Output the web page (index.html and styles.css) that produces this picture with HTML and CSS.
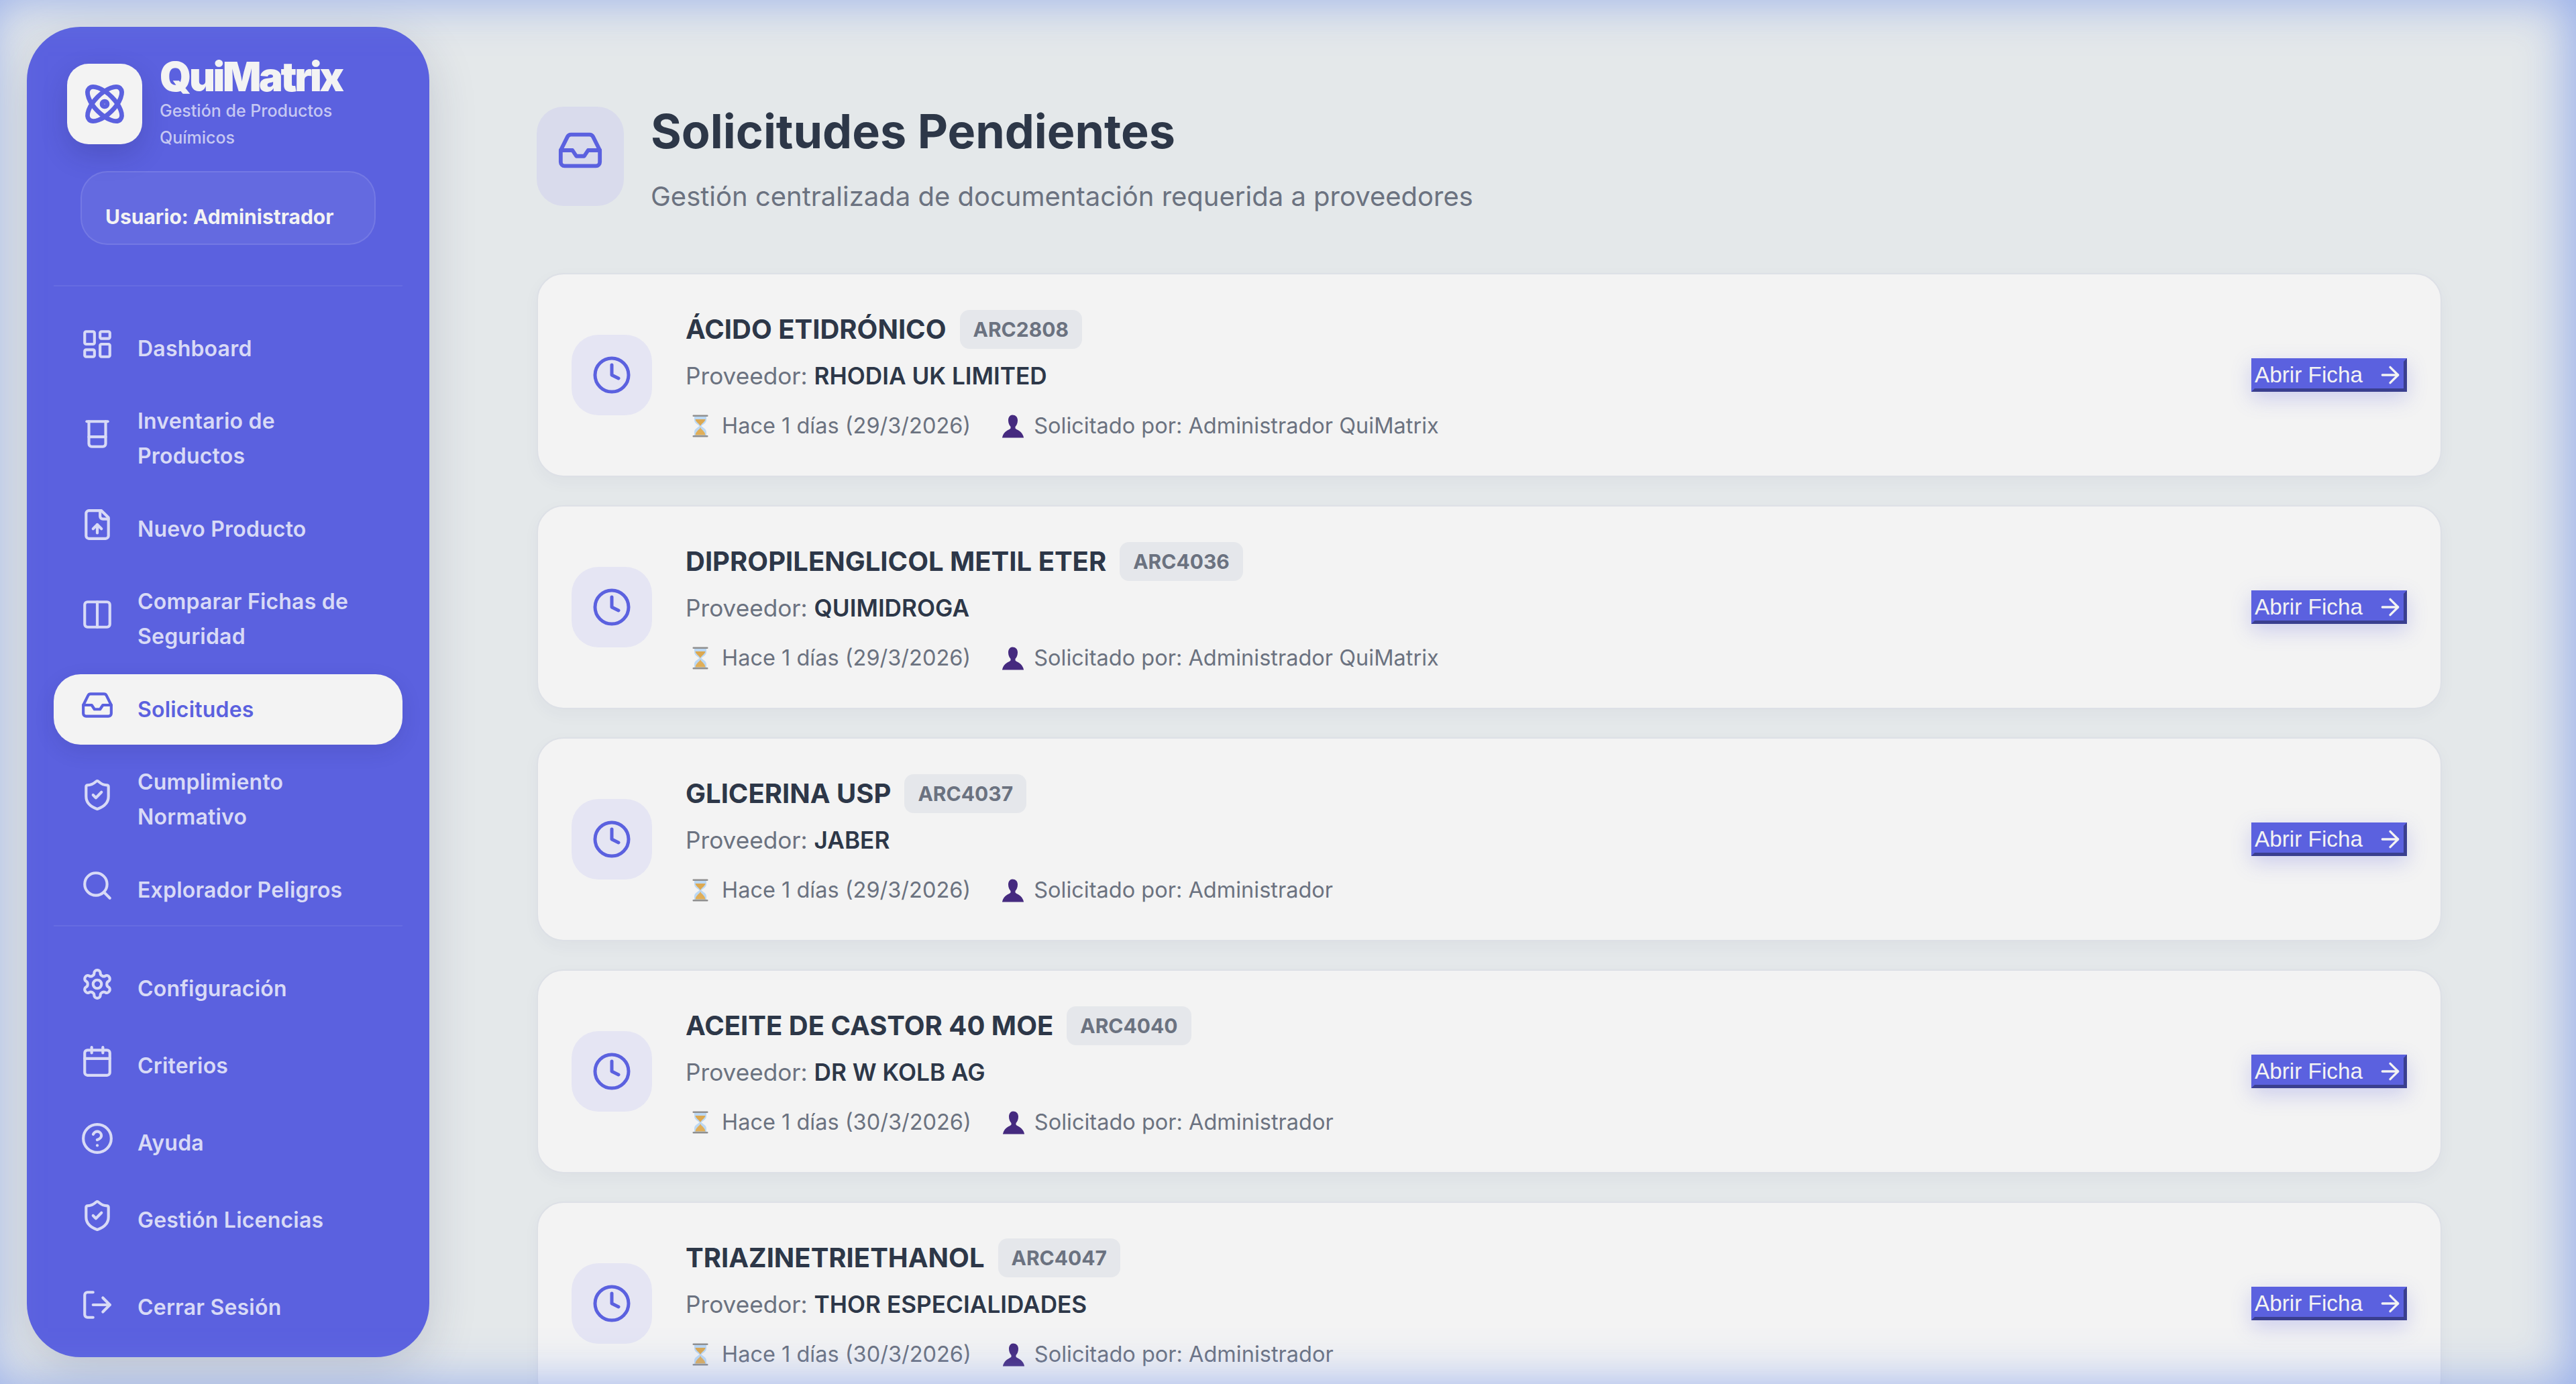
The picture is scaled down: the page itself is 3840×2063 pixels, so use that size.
FILE: index.html
```html
<!DOCTYPE html>
<html lang="es">
<head>
  <meta charset="UTF-8" />
  <meta name="viewport" content="width=device-width, initial-scale=1.0"/>
  <title>QuiMatrix: Solicitudes Pendientes</title>
  <link rel="stylesheet" href="styles.css">
</head>
<body>
  <div class="app">
    <aside class="sidebar">
      <div class="brand">
        <div class="brand-logo">
          <svg class="ico" viewBox="0 0 24 24"><circle cx="12" cy="12" r="1.4"/><path d="M20.2 20.2c2.04-2.03.02-7.36-4.5-11.9-4.54-4.52-9.87-6.54-11.9-4.5-2.04 2.03-.02 7.36 4.5 11.9 4.54 4.52 9.87 6.54 11.9 4.5Z"/><path d="M15.7 15.7c4.52-4.54 6.54-9.87 4.5-11.9-2.03-2.04-7.36-.02-11.9 4.5-4.52 4.54-6.54 9.87-4.5 11.9 2.03 2.04 7.36.02 11.9-4.5Z"/></svg>
        </div>
        <div class="brand-text">
          <div class="brand-name">QuiMatrix</div>
          <div class="brand-sub">Gestión de Productos Químicos</div>
        </div>
      </div>

      <div class="user-box">Usuario: Administrador</div>

      <nav class="nav nav-main">
        <a class="nav-item"><svg class="ico" viewBox="0 0 24 24"><rect width="7" height="9" x="3" y="3" rx="1"/><rect width="7" height="5" x="14" y="3" rx="1"/><rect width="7" height="9" x="14" y="12" rx="1"/><rect width="7" height="5" x="3" y="16" rx="1"/></svg><span>Dashboard</span></a>
        <a class="nav-item"><svg class="ico" viewBox="0 0 24 24"><path d="M4.5 3h15"/><path d="M6 3v16a2 2 0 0 0 2 2h8a2 2 0 0 0 2-2V3"/><path d="M6 14h12"/></svg><span>Inventario de Productos</span></a>
        <a class="nav-item"><svg class="ico" viewBox="0 0 24 24"><path d="M15 2H6a2 2 0 0 0-2 2v16a2 2 0 0 0 2 2h12a2 2 0 0 0 2-2V7Z"/><path d="M14 2v4a2 2 0 0 0 2 2h4"/><path d="M12 12v6"/><path d="m15 15-3-3-3 3"/></svg><span>Nuevo Producto</span></a>
        <a class="nav-item"><svg class="ico" viewBox="0 0 24 24"><rect width="18" height="18" x="3" y="3" rx="2"/><path d="M12 3v18"/></svg><span>Comparar Fichas de Seguridad</span></a>
        <a class="nav-item active"><svg class="ico" viewBox="0 0 24 24"><polyline points="22 12 16 12 14 15 10 15 8 12 2 12"/><path d="M5.45 5.11 2 12v6a2 2 0 0 0 2 2h16a2 2 0 0 0 2-2v-6l-3.45-6.89A2 2 0 0 0 16.76 4H7.24a2 2 0 0 0-1.79 1.11z"/></svg><span>Solicitudes</span></a>
        <a class="nav-item"><svg class="ico" viewBox="0 0 24 24"><path d="M20 13c0 5-3.5 7.5-7.66 8.95a1 1 0 0 1-.67-.01C7.5 20.5 4 18 4 13V6a1 1 0 0 1 1-1c2 0 4.5-1.2 6.24-2.72a1.17 1.17 0 0 1 1.52 0C14.51 3.81 17 5 19 5a1 1 0 0 1 1 1z"/><path d="m9 12 2 2 4-4"/></svg><span>Cumplimiento Normativo</span></a>
        <a class="nav-item"><svg class="ico" viewBox="0 0 24 24"><circle cx="11" cy="11" r="8"/><path d="m21 21-4.3-4.3"/></svg><span>Explorador Peligros</span></a>
      </nav>

      <nav class="nav nav-bottom">
        <a class="nav-item"><svg class="ico" viewBox="0 0 24 24"><path d="M12.22 2h-.44a2 2 0 0 0-2 2v.18a2 2 0 0 1-1 1.73l-.43.25a2 2 0 0 1-2 0l-.15-.08a2 2 0 0 0-2.73.73l-.22.38a2 2 0 0 0 .73 2.73l.15.1a2 2 0 0 1 1 1.72v.51a2 2 0 0 1-1 1.74l-.15.09a2 2 0 0 0-.73 2.73l.22.38a2 2 0 0 0 2.73.73l.15-.08a2 2 0 0 1 2 0l.43.25a2 2 0 0 1 1 1.73V20a2 2 0 0 0 2 2h.44a2 2 0 0 0 2-2v-.18a2 2 0 0 1 1-1.73l.43-.25a2 2 0 0 1 2 0l.15.08a2 2 0 0 0 2.73-.73l.22-.39a2 2 0 0 0-.73-2.73l-.15-.08a2 2 0 0 1-1-1.74v-.5a2 2 0 0 1 1-1.74l.15-.09a2 2 0 0 0 .73-2.73l-.22-.38a2 2 0 0 0-2.73-.73l-.15.08a2 2 0 0 1-2 0l-.43-.25a2 2 0 0 1-1-1.73V4a2 2 0 0 0-2-2z"/><circle cx="12" cy="12" r="3"/></svg><span>Configuración</span></a>
        <a class="nav-item"><svg class="ico" viewBox="0 0 24 24"><path d="M8 2v4"/><path d="M16 2v4"/><rect width="18" height="18" x="3" y="4" rx="2"/><path d="M3 10h18"/></svg><span>Criterios</span></a>
        <a class="nav-item"><svg class="ico" viewBox="0 0 24 24"><circle cx="12" cy="12" r="10"/><path d="M9.09 9a3 3 0 0 1 5.83 1c0 2-3 3-3 3"/><path d="M12 17h.01"/></svg><span>Ayuda</span></a>
        <a class="nav-item"><svg class="ico" viewBox="0 0 24 24"><path d="M20 13c0 5-3.5 7.5-7.66 8.95a1 1 0 0 1-.67-.01C7.5 20.5 4 18 4 13V6a1 1 0 0 1 1-1c2 0 4.5-1.2 6.24-2.72a1.17 1.17 0 0 1 1.52 0C14.51 3.81 17 5 19 5a1 1 0 0 1 1 1z"/><path d="m9 12 2 2 4-4"/></svg><span>Gestión Licencias</span></a>
      </nav>

      <a class="nav-item logout"><svg class="ico" viewBox="0 0 24 24"><path d="M9 21H5a2 2 0 0 1-2-2V5a2 2 0 0 1 2-2h4"/><polyline points="16 17 21 12 16 7"/><line x1="21" y1="12" x2="9" y2="12"/></svg><span>Cerrar Sesión</span></a>
    </aside>

    <main class="main">
      <header class="page-head">
        <div class="head-icon">
          <svg class="ico" viewBox="0 0 24 24"><polyline points="22 12 16 12 14 15 10 15 8 12 2 12"/><path d="M5.45 5.11 2 12v6a2 2 0 0 0 2 2h16a2 2 0 0 0 2-2v-6l-3.45-6.89A2 2 0 0 0 16.76 4H7.24a2 2 0 0 0-1.79 1.11z"/></svg>
        </div>
        <div>
          <h1>Solicitudes Pendientes</h1>
          <p>Gestión centralizada de documentación requerida a proveedores</p>
        </div>
      </header>

      <section class="cards">
        <article class="card">
          <div class="card-icon"><svg class="ico" viewBox="0 0 24 24"><circle cx="12" cy="12" r="10"/><polyline points="12 6 12 12 16 14"/></svg></div>
          <div class="card-body">
            <div class="card-title"><h3>ÁCIDO ETIDRÓNICO</h3><span class="code">ARC2808</span></div>
            <div class="card-prov">Proveedor: <strong>RHODIA UK LIMITED</strong></div>
            <div class="card-meta">
              <span class="meta-item"><svg class="emoji" viewBox="0 0 36 36"><use href="#hourglass"/></svg>Hace 1 días (29/3/2026)</span>
              <span class="meta-item"><svg class="emoji" viewBox="0 0 36 36"><use href="#person"/></svg>Solicitado por: Administrador QuiMatrix</span>
            </div>
          </div>
          <button class="open-btn">Abrir Ficha<svg class="ico" viewBox="0 0 24 24"><path d="M5 12h14"/><path d="m12 5 7 7-7 7"/></svg></button>
        </article>

        <article class="card">
          <div class="card-icon"><svg class="ico" viewBox="0 0 24 24"><circle cx="12" cy="12" r="10"/><polyline points="12 6 12 12 16 14"/></svg></div>
          <div class="card-body">
            <div class="card-title"><h3>DIPROPILENGLICOL METIL ETER</h3><span class="code">ARC4036</span></div>
            <div class="card-prov">Proveedor: <strong>QUIMIDROGA</strong></div>
            <div class="card-meta">
              <span class="meta-item"><svg class="emoji" viewBox="0 0 36 36"><use href="#hourglass"/></svg>Hace 1 días (29/3/2026)</span>
              <span class="meta-item"><svg class="emoji" viewBox="0 0 36 36"><use href="#person"/></svg>Solicitado por: Administrador QuiMatrix</span>
            </div>
          </div>
          <button class="open-btn">Abrir Ficha<svg class="ico" viewBox="0 0 24 24"><path d="M5 12h14"/><path d="m12 5 7 7-7 7"/></svg></button>
        </article>

        <article class="card">
          <div class="card-icon"><svg class="ico" viewBox="0 0 24 24"><circle cx="12" cy="12" r="10"/><polyline points="12 6 12 12 16 14"/></svg></div>
          <div class="card-body">
            <div class="card-title"><h3>GLICERINA USP</h3><span class="code">ARC4037</span></div>
            <div class="card-prov">Proveedor: <strong>JABER</strong></div>
            <div class="card-meta">
              <span class="meta-item"><svg class="emoji" viewBox="0 0 36 36"><use href="#hourglass"/></svg>Hace 1 días (29/3/2026)</span>
              <span class="meta-item"><svg class="emoji" viewBox="0 0 36 36"><use href="#person"/></svg>Solicitado por: Administrador</span>
            </div>
          </div>
          <button class="open-btn">Abrir Ficha<svg class="ico" viewBox="0 0 24 24"><path d="M5 12h14"/><path d="m12 5 7 7-7 7"/></svg></button>
        </article>

        <article class="card">
          <div class="card-icon"><svg class="ico" viewBox="0 0 24 24"><circle cx="12" cy="12" r="10"/><polyline points="12 6 12 12 16 14"/></svg></div>
          <div class="card-body">
            <div class="card-title"><h3>ACEITE DE CASTOR 40 MOE</h3><span class="code">ARC4040</span></div>
            <div class="card-prov">Proveedor: <strong>DR W KOLB AG</strong></div>
            <div class="card-meta">
              <span class="meta-item"><svg class="emoji" viewBox="0 0 36 36"><use href="#hourglass"/></svg>Hace 1 días (30/3/2026)</span>
              <span class="meta-item"><svg class="emoji" viewBox="0 0 36 36"><use href="#person"/></svg>Solicitado por: Administrador</span>
            </div>
          </div>
          <button class="open-btn">Abrir Ficha<svg class="ico" viewBox="0 0 24 24"><path d="M5 12h14"/><path d="m12 5 7 7-7 7"/></svg></button>
        </article>

        <article class="card">
          <div class="card-icon"><svg class="ico" viewBox="0 0 24 24"><circle cx="12" cy="12" r="10"/><polyline points="12 6 12 12 16 14"/></svg></div>
          <div class="card-body">
            <div class="card-title"><h3>TRIAZINETRIETHANOL</h3><span class="code">ARC4047</span></div>
            <div class="card-prov">Proveedor: <strong>THOR ESPECIALIDADES</strong></div>
            <div class="card-meta">
              <span class="meta-item"><svg class="emoji" viewBox="0 0 36 36"><use href="#hourglass"/></svg>Hace 1 días (30/3/2026)</span>
              <span class="meta-item"><svg class="emoji" viewBox="0 0 36 36"><use href="#person"/></svg>Solicitado por: Administrador</span>
            </div>
          </div>
          <button class="open-btn">Abrir Ficha<svg class="ico" viewBox="0 0 24 24"><path d="M5 12h14"/><path d="m12 5 7 7-7 7"/></svg></button>
        </article>
      </section>
    </main>
  </div>

  <!-- emojis del listado, dibujados para no depender de una fuente -->
  <svg class="sprites" width="0" height="0">
    <symbol id="hourglass" viewBox="0 0 36 36">
      <path d="M9 3h18v6c0 5-6 7-7.500 9 1.500 2 7.500 4 7.500 9v6H9v-6c0-5 6-7 7.500-9C15 16 9 14 9 9z" fill="#bcd8f3"/>
      <path d="M10.500 8h15c-.6 4-6 6.500-7.500 10-1.500-3.500-6.900-6-7.500-10z" fill="#dca850"/>
      <path d="M18 19.500c.5 4 6.800 5.500 7.500 12h-15c.7-6.500 7-8 7.500-12z" fill="#e0ae58"/>
      <rect x="6.500" y="1.500" width="23" height="2.500" rx="1" fill="#8f8f8f"/>
      <rect x="6.500" y="32" width="23" height="2.500" rx="1" fill="#8f8f8f"/>
    </symbol>
    <symbol id="person" viewBox="0 0 36 36">
      <path d="M18 1.500c5 0 8 3 8 8 0 4-1.500 7.500-3.500 9.500v2.500c1.500 2.500 10 3 12.500 13.500v.5H3v-.5c2.500-10.500 11-11 12.500-13.500V19c-2-2-3.500-5.500-3.500-9.500 0-5 3-8 6-8z" fill="#452a7f"/>
    </symbol>
  </svg>
</body>
</html>
```

FILE: styles.css
```css
* {
  box-sizing: border-box;
}

html, body {
  height: 100%;
}

body {
  margin: 0;
  overflow: hidden;
  font-family: "Inter", "Noto Sans", sans-serif;
  background: #e4e8ea;
  color: #2d3748;
}

/* halo azul del borde de la ventana, va por encima de todo */
body::after {
  content: "";
  position: fixed;
  inset: 0;
  pointer-events: none;
  box-shadow: inset -12px 0 70px rgba(125, 155, 235, 0.75);
}

.sprites {
  position: absolute;
}

.ico {
  fill: none;
  stroke: currentColor;
  stroke-width: 2;
  stroke-linecap: round;
  stroke-linejoin: round;
  flex: none;
}

.app {
  display: flex;
  height: 100vh;
  padding: 40px 0 40px 40px;
}

/* Sidebar */
.sidebar {
  width: 600px;
  flex: none;
  display: flex;
  flex-direction: column;
  padding: 55px 40px 0;
  background: #5b61df;
  border-radius: 80px;
  box-shadow: 0 20px 70px rgba(40, 50, 90, 0.18);
}

.brand {
  display: flex;
  flex: none;
  align-items: flex-start;
  gap: 26px;
  height: 130px;
  padding-left: 20px;
}

.brand-logo {
  width: 112px;
  height: 120px;
  flex: none;
  display: flex;
  align-items: center;
  justify-content: center;
  background: #f3f3f3;
  border-radius: 32px;
  color: #5b61df;
  box-shadow: 0 16px 40px rgba(30, 30, 90, 0.2);
}

.brand-logo .ico {
  width: 68px;
  height: 68px;
  stroke-width: 2.4;
}

.brand-text {
  width: 300px;
  margin-top: -12px;
}

.brand-name {
  font-size: 60px;
  line-height: 62px;
  font-weight: 900;
  letter-spacing: -3.3px;
  color: #f3f3f3;
}

.brand-sub {
  font-size: 25px;
  line-height: 40px;
  font-weight: 500;
  color: #c6c8f2;
}

.user-box {
  flex: none;
  margin: 30px 40px 0;
  height: 110px;
  padding: 46px 35px 0;
  font-size: 30px;
  line-height: 40px;
  font-weight: 700;
  white-space: nowrap;
  color: #f3f3f3;
  background: rgba(255, 255, 255, 0.06);
  border: 2px solid rgba(255, 255, 255, 0.1);
  border-radius: 40px;
}

.nav {
  display: flex;
  flex: none;
  flex-direction: column;
}

.nav-main {
  margin-top: 60px;
  padding-top: 40px;
  gap: 3.5px;
  border-top: 2px solid rgba(255, 255, 255, 0.07);
  border-bottom: 2px solid rgba(255, 255, 255, 0.07);
}

.nav-bottom {
  padding-top: 40px;
  gap: 10px;
}

.nav-item {
  display: flex;
  flex: none;
  align-items: center;
  gap: 35px;
  min-height: 105px;
  padding: 26.5px 40px;
  font-size: 32px;
  line-height: 52px;
  font-weight: 600;
  letter-spacing: 0.2px;
  color: #d8daf6;
  border-radius: 40px;
}

.nav-item .ico {
  width: 50px;
  height: 50px;
  margin: -7px 0 7px;
}

.nav-item.active {
  background: #f3f3f3;
  color: #5b61df;
  box-shadow: 0 10px 30px rgba(30, 30, 90, 0.12);
}

.logout {
  margin-top: auto;
  margin-bottom: 22px;
}

.logout .ico {
  margin: -3.5px 0 3.5px;
}

/* Contenido */
.main {
  flex: 1;
  min-width: 0;
  padding: 119px 200px 0 160px;
}

.page-head {
  display: flex;
  gap: 40px;
  height: 148px;
  margin-bottom: 100px;
}

.head-icon {
  width: 130px;
  height: 148px;
  flex: none;
  display: flex;
  align-items: center;
  justify-content: center;
  background: #d9dbec;
  border-radius: 40px;
  color: #5b61df;
}

.head-icon .ico {
  width: 70px;
  height: 70px;
  margin-bottom: 18px;
}

h1 {
  margin: 0;
  font-size: 70px;
  line-height: 74px;
  font-weight: 700;
  color: #2d3748;
}

.page-head p {
  margin: 32px 0 0;
  font-size: 40px;
  line-height: 56px;
  color: #6b7280;
}

.cards {
  display: flex;
  flex-direction: column;
  gap: 42px;
}

.card {
  display: flex;
  align-items: center;
  gap: 50px;
  height: 304px;
  flex: none;
  padding: 0 50px;
  background: #f3f3f3;
  border: 2px solid #dde0e6;
  border-radius: 40px;
  box-shadow: 0 8px 24px rgba(40, 50, 90, 0.04);
}

.card-icon {
  width: 120px;
  height: 120px;
  flex: none;
  display: flex;
  align-items: center;
  justify-content: center;
  background: #e5e5f3;
  border-radius: 40px;
  color: #5b61df;
}

.card-icon .ico {
  width: 60px;
  height: 60px;
}

.card-body {
  flex: 1;
  min-width: 0;
}

.card-title {
  display: flex;
  align-items: center;
  gap: 20px;
  margin-top: 2px;
}

h3 {
  margin: 0;
  font-size: 40px;
  line-height: 58px;
  font-weight: 650;
  color: #2d3748;
}

.code {
  padding: 0 20px;
  font-size: 30px;
  line-height: 58px;
  font-weight: 700;
  color: #6b7280;
  background: #e5e7eb;
  border-radius: 14px;
}

.card-prov {
  margin-top: 16px;
  font-size: 35.2px;
  line-height: 48px;
  color: #6b7280;
}

.card-prov strong {
  font-weight: 600;
  color: #2d3748;
}

.card-meta {
  display: flex;
  gap: 40px;
  margin-top: 27px;
  font-size: 32.5px;
  line-height: 48px;
  color: #6b7280;
}

.meta-item {
  display: flex;
  align-items: center;
}

.emoji {
  width: 36px;
  height: 36px;
  margin: 0 14px 0 4px;
  flex: none;
}

.open-btn {
  display: flex;
  align-items: center;
  gap: 21px;
  height: 50px;
  padding: 0;
  font-family: "Liberation Sans", Arial, sans-serif;
  font-size: 33.3px;
  color: #f3f3f3;
  background: #5b61df;
  border: 5px solid;
  border-color: #5b61df #3a3f8f #3a3f8f #5b61df;
  box-shadow: 0 10px 30px rgba(91, 97, 223, 0.25);
}

.open-btn .ico {
  width: 40px;
  height: 40px;
}
```
